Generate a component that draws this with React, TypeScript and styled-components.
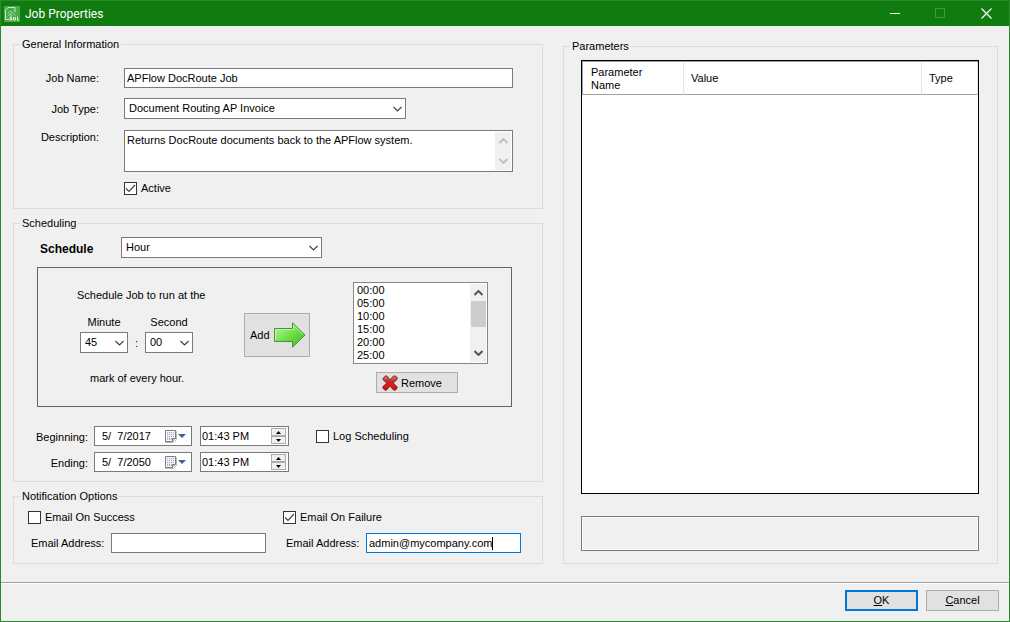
import React, { useId } from 'react';
import styled, { createGlobalStyle, css } from 'styled-components';

const GlobalStyle = createGlobalStyle`
  *, *::before, *::after { box-sizing: border-box; }
  body { margin: 0; background: #f0f0f0; }
  body, button, input, select, textarea {
    font-family: "Liberation Sans", Arial, sans-serif;
    font-size: 11px;
    line-height: 14px;
    color: #000;
  }
  svg { display: block; flex: none; }
`;

const Window = styled.div`
  display: flex;
  flex-direction: column;
  min-height: 100vh;
  background: #f0f0f0;
  border: 1px solid #2a8a2a;
  border-top-width: 0;
`;

const TitleBar = styled.header`
  display: flex;
  align-items: center;
  height: 26px;
  padding-left: 3px;
  background: #107c10;
  border-top: 1px solid #2a8a2a;
  color: #fff;
`;

const Title = styled.h1`
  flex: 1;
  margin: 0;
  padding-left: 5px;
  font-family: Roboto, "Open Sans", sans-serif;
  font-size: 12px;
  font-weight: 400;
  line-height: 16px;
`;

const CaptionButton = styled.button`
  display: grid;
  place-items: center;
  width: 46px;
  height: 24px;
  padding: 0;
  border: 0;
  background: none;
`;

const Content = styled.main`
  flex: 1;
  display: grid;
  grid-template-columns: minmax(0, 530fr) minmax(0, 435fr);
  column-gap: 20px;
  padding: 12px 11px 18px 12px;
`;

const LeftColumn = styled.div`
  display: flex;
  flex-direction: column;
  gap: 8px;
`;

const RightColumn = styled.div`
  display: flex;
  flex-direction: column;
  padding-top: 2px;
`;

const Group = styled.fieldset`
  min-width: 0;
  margin: 0;
  padding: 0;
  border: 1px solid #dcdcdc;
`;

const Legend = styled.legend`
  margin-left: 6px;
  padding: 0 2px;
  line-height: 13px;
`;

const GeneralGrid = styled.div`
  display: grid;
  grid-template-columns: 85px minmax(0, 1fr);
  grid-template-rows: 20px 22px 42px 13px;
  gap: 10px 25px;
  padding: 17px 29px 13px 0;
`;

const FieldLabel = styled.label<{ $top?: boolean }>`
  align-self: ${(p) => (p.$top ? 'start' : 'center')};
  text-align: right;
  white-space: nowrap;
`;

const boxed = css`
  background: #fff;
  border: 1px solid #7a7a7a;
`;

const TextInput = styled.input`
  ${boxed}
  width: 100%;
  height: 20px;
  padding: 0 2px;
  border-radius: 0;
  outline: none;
`;

const SelectBox = styled.div<{ $width: number }>`
  position: relative;
  width: ${(p) => p.$width}px;
  height: 21px;
  svg {
    position: absolute;
    right: 4px;
    top: 8px;
    pointer-events: none;
  }
`;

const NativeSelect = styled.select`
  ${boxed}
  appearance: none;
  display: block;
  width: 100%;
  height: 21px;
  padding: 0 0 1px 4px;
  border-radius: 0;
  outline: none;
`;

const Chevron = ({ up, color = '#444', heavy }: { up?: boolean; color?: string; heavy?: boolean }) => (
  <svg width="9" height="6" viewBox="0 0 9 6" fill="none" stroke={color} strokeWidth={heavy ? 2 : 1.2}>
    <path d={up ? 'M.5 5l4-4 4 4' : 'M.5 1l4 4 4-4'} />
  </svg>
);

type DropDownProps = { id: string; width: number; value: string };
const DropDown = ({ id, width, value }: DropDownProps) => (
  <SelectBox $width={width}>
    <NativeSelect id={id} defaultValue={value}>
      <option>{value}</option>
    </NativeSelect>
    <Chevron />
  </SelectBox>
);

const MemoBox = styled.div`
  ${boxed}
  display: flex;
  height: 42px;
  padding: 1px;
`;

const Memo = styled.textarea`
  flex: 1;
  min-width: 0;
  padding: 1px;
  border: 0;
  background: none;
  resize: none;
  outline: none;
  overflow: hidden;
`;

const ScrollTrack = styled.div`
  display: flex;
  flex-direction: column;
  align-items: center;
  width: 16px;
  padding: 6px 0;
  background: #f0f0f0;
`;

const ScrollThumb = styled.div`
  width: 15px;
  height: 26px;
  margin: 5px 0 auto;
  background: #cdcdcd;
`;

const Spacer = styled.div`
  flex: 1;
`;

const CheckLabel = styled.label`
  display: flex;
  align-items: center;
  gap: 4px;
  height: 13px;
  line-height: 12px;
`;

const CheckText = styled.span`
  align-self: flex-start;
`;

const CheckFrame = styled.span`
  position: relative;
  display: block;
  width: 13px;
  height: 13px;
  svg {
    position: absolute;
    inset: 0;
    pointer-events: none;
    visibility: hidden;
  }
  input:checked + svg { visibility: visible; }
`;

const CheckInput = styled.input`
  appearance: none;
  display: block;
  width: 13px;
  height: 13px;
  margin: 0;
  background: #fff;
  border: 1px solid #333;
`;

const Check = ({ label, checked = false }: { label: string; checked?: boolean }) => (
  <CheckLabel>
    <CheckFrame>
      <CheckInput type="checkbox" defaultChecked={checked} />
      <svg width="13" height="13" viewBox="0 0 13 13" fill="none" stroke="#444" strokeWidth="1.2">
        <path d="M2 6.500l3 3 6-6.500" />
      </svg>
    </CheckFrame>
    <CheckText>{label}</CheckText>
  </CheckLabel>
);

const ScheduleRow = styled.div`
  display: flex;
  align-items: center;
  padding: 7px 0 9px 26px;
`;

const StrongLabel = styled.label`
  width: 81px;
  padding-top: 2px;
  font-size: 12px;
  font-weight: 700;
`;

const Frame = styled.div`
  display: grid;
  grid-template-columns: 167px 109px 135px;
  align-items: start;
  margin: 0 30px 0 23px;
  padding: 14px 0 13px 39px;
  border: 1px solid #646464;
`;

const TimePicker = styled.div`
  display: flex;
  flex-direction: column;
  padding-top: 6px;
`;

const PickerRow = styled.div`
  display: flex;
  align-items: flex-end;
  padding: 13px 0 18px 3px;
`;

const PickerField = styled.div`
  display: flex;
  flex-direction: column;
  gap: 3px;
  text-align: center;
`;

const Colon = styled.span`
  width: 17px;
  padding-bottom: 3px;
  text-align: center;
`;

const Indented = styled.span`
  padding-left: 13px;
`;

const AddCell = styled.div`
  padding-top: 31px;
`;

const PushButton = styled.button<{ $w: number }>`
  display: flex;
  align-items: center;
  justify-content: center;
  width: ${(p) => p.$w}px;
  height: 21px;
  padding: 0;
  background: #e1e1e1;
  border: 1px solid #adadad;
  border-radius: 0;
`;

const AddButton = styled(PushButton)`
  justify-content: flex-start;
  gap: 4px;
  height: 44px;
  padding-left: 5px;
`;

const RemoveButton = styled(PushButton)`
  justify-content: flex-start;
  gap: 3px;
  margin-left: 23px;
  padding-left: 5px;
`;

const DialogButton = styled(PushButton)<{ $primary?: boolean }>`
  padding-bottom: 2px;
  ${(p) => p.$primary && 'border: 2px solid #0078d7;'}
`;

const ListColumn = styled.div`
  display: flex;
  flex-direction: column;
  gap: 8px;
`;

const ListBox = styled.div`
  display: flex;
  height: 82px;
  padding: 1px;
  background: #fff;
  border: 1px solid #828790;
`;

const List = styled.select`
  flex: 1;
  min-width: 0;
  height: 78px;
  padding: 0;
  border: 0;
  border-radius: 0;
  background: none;
  overflow: hidden;
  outline: none;
  option {
    height: 13px;
    min-height: 13px;
    padding: 0 2px;
    line-height: 14px;
  }
`;

const RangeArea = styled.div`
  display: flex;
  align-items: flex-start;
  padding: 19px 0 9px 0;
`;

const RangeGrid = styled.div`
  display: flex;
  flex-direction: column;
  gap: 6px;
  margin-right: 27px;
`;

const RangeRow = styled.div`
  display: grid;
  grid-template-columns: 74px 98px 89px;
  align-items: start;
  label { padding-top: 4px; }
  > :nth-child(2) { margin-left: 6px; margin-right: -6px; }
  > :nth-child(3) { margin-left: 14px; margin-right: -14px; }
`;

const PickerBox = styled.div`
  ${boxed}
  display: flex;
  align-items: center;
  height: 20px;
`;

const PlainInput = styled.input<{ $pad: number }>`
  flex: 1;
  min-width: 0;
  padding: 0 0 0 ${(p) => p.$pad}px;
  border: 0;
  background: none;
  outline: none;
`;

const CalendarButton = styled.button`
  display: flex;
  align-items: center;
  gap: 1px;
  width: 26px;
  padding: 0;
  border: 0;
  background: none;
`;

const Spinner = styled.div`
  display: flex;
  flex-direction: column;
  width: 15px;
  margin-right: 2px;
`;

const SpinButton = styled.button`
  display: grid;
  place-items: center;
  height: 8px;
  padding: 0;
  background: #f0f0f0;
  border: 1px solid #adadad;
  border-radius: 0;
`;

const LogCell = styled.div`
  padding: 4px 0 0 14px;
`;

const NotifyGrid = styled.div`
  display: grid;
  grid-template-columns: 1fr 1fr;
  row-gap: 9px;
  padding: 8px 4px 10px 14px;
`;

const AddressField = styled.div`
  display: flex;
  align-items: center;
  padding-left: 3px;
  label { width: 80px; white-space: nowrap; }
`;

const AddressBox = styled.div<{ $focused?: boolean }>`
  display: flex;
  align-items: center;
  width: 155px;
  height: 20px;
  padding-left: 2px;
  overflow: hidden;
  background: #fff;
  border: 1px solid ${(p) => (p.$focused ? '#0078d7' : '#7a7a7a')};
`;

const AddressInput = styled.input<{ $fit?: boolean }>`
  ${(p) => (p.$fit ? 'field-sizing: content;' : 'width: 100%;')}
  padding: 0;
  border: 0;
  background: none;
  outline: none;
  caret-color: transparent;
`;

const Caret = styled.span`
  width: 1px;
  height: 13px;
  background: #000;
`;

const ParamGroup = styled(Group)`
  flex: 1;
  display: flex;
  flex-direction: column;
  padding: 0;
`;

const ParamBody = styled.div`
  flex: 1;
  display: flex;
  flex-direction: column;
  gap: 22px;
  padding: 7px 18px 12px 17px;
`;

const GridPanel = styled.div`
  flex: 1;
  background: #fff;
  border: 1px solid #000;
`;

const ParamTable = styled.table`
  width: 100%;
  table-layout: fixed;
  border-collapse: separate;
  border-spacing: 0;
  border-top: 1px solid #a0a0a0;
  border-left: 1px solid #a0a0a0;
`;

const HeadCell = styled.th`
  height: 33px;
  padding: 1px 36px 0 8px;
  border-right: 1px solid #e5e5e5;
  border-bottom: 1px solid #a0a0a0;
  font-weight: 400;
  line-height: 13px;
  text-align: left;
  &:not(:first-child) { padding-right: 0; padding-left: 7px; }
`;

const HelpPanel = styled.div`
  height: 35px;
  border: 1px solid #7a7a7a;
  box-shadow: inset 0 0 0 1px #fff;
`;

const Footer = styled.footer`
  display: flex;
  justify-content: flex-end;
  gap: 8px;
  padding: 7px 10px 10px;
  border-top: 1px solid #a0a0a0;
  box-shadow: inset 0 1px 0 #fff;
`;

const AppIcon = () => (
  <svg width="16" height="16" viewBox="0 0 16 16" fill="none">
    <rect width="16" height="16" fill="#4aa94a" />
    <path d="M1.500 13.500V4l2.500-2.500h7V6M1.500 13.500h4" stroke="#c4e6c4" />
    <path d="M4 7.500C5 5 8.500 5 9.500 7.500l2 2M3.500 10.500c1-2 4-2.500 5-.5M6 8h2" stroke="#a8d8a8" />
    <path d="M8 11H6v1.500h2V14H5.500M9.500 11.500h2V14h-2zM13.500 10.500V14H15" stroke="#d8f0d8" />
  </svg>
);

const ArrowIcon = () => (
  <svg width="32" height="26" viewBox="0 0 32 26">
    <defs>
      <linearGradient id="arrow-fill" x1="0" y1="0" x2="1" y2="1">
        <stop offset="0" stopColor="#c4f7b4" />
        <stop offset=".5" stopColor="#6fe048" />
        <stop offset="1" stopColor="#3fb521" />
      </linearGradient>
    </defs>
    <path d="M.5 6.500h18V.8L31 13 18.500 25.200V19.500H.5z" fill="url(#arrow-fill)" stroke="#3f9a2c" />
    <path d="M1.500 18V7.500h18V3.200L29.500 13" fill="none" stroke="#c9f7bb" strokeOpacity=".8" />
  </svg>
);

const CrossIcon = () => (
  <svg width="16" height="16" viewBox="0 0 16 16">
    <defs>
      <linearGradient id="cross-fill" x1="0" y1="0" x2="0" y2="1">
        <stop offset="0" stopColor="#d98080" />
        <stop offset=".4" stopColor="#c42626" />
        <stop offset=".75" stopColor="#e01818" />
        <stop offset="1" stopColor="#a81010" />
      </linearGradient>
    </defs>
    <path
      d="M1 3.500L3.500.8 5 1 8 4.800 11.500 1l2 0L15.300 3 15 4.500 11.200 8l4 4-.2 1.500L13 15.300l-1.500-.3L8 11.200 4.500 15 3 15.300.8 13 1 11.500 4.800 8 1.200 5z"
      fill="url(#cross-fill)"
      stroke="#7a1616"
      strokeWidth=".9"
    />
  </svg>
);

const CalendarIcon = () => (
  <svg width="12" height="13" viewBox="0 0 12 13">
    <path d="M10.500 1.500h1v8l-3 3h-8v-1" fill="none" stroke="#c0b8b8" />
    <path d="M.5.5h10v8l-3 3h-7z" fill="#fafaff" stroke="#857878" />
    <path d="M2 2h7v6L7 10H2z" fill="#a3b1cc" />
    <path d="M2 3.500h7M2 5.500h7M2 7.500h7M3.500 2v8M5.500 2v8M7.500 2v8" stroke="#f4f6fc" strokeWidth=".8" />
    <path d="M7.500 11.500v-3h3" fill="#d8d4dc" stroke="#857878" />
  </svg>
);

const Triangle = ({ up, color = '#000', size = 5 }: { up?: boolean; color?: string; size?: number }) => (
  <svg width={size} height={size === 5 ? 3 : 4} viewBox="0 0 8 4" preserveAspectRatio="none">
    <path d={up ? 'M0 4L4 0l4 4z' : 'M0 0h8L4 4z'} fill={color} />
  </svg>
);

type RangeProps = { label: string; date: string; time: string };
const RangeFields = ({ label, date, time }: RangeProps) => {
  const id = useId();
  return (
    <RangeRow>
      <FieldLabel htmlFor={id} $top>{label}</FieldLabel>
      <PickerBox>
        <PlainInput id={id} $pad={7} defaultValue={date} />
        <CalendarButton type="button" aria-label={`${label} calendar`}>
          <CalendarIcon />
          <Triangle color="#3f5f94" size={8} />
        </CalendarButton>
      </PickerBox>
      <PickerBox>
        <PlainInput $pad={1} aria-label={`${label} time`} defaultValue={time} />
        <Spinner>
          <SpinButton type="button" aria-label="Later"><Triangle up /></SpinButton>
          <SpinButton type="button" aria-label="Earlier"><Triangle /></SpinButton>
        </Spinner>
      </PickerBox>
    </RangeRow>
  );
};

const marks = ['00:00', '05:00', '10:00', '15:00', '20:00', '25:00'];

export default function App() {
  return (
    <>
      <GlobalStyle />
      <Window>
        <TitleBar>
          <AppIcon />
          <Title>Job Properties</Title>
          <CaptionButton aria-label="Minimize">
            <svg width="11" height="11" viewBox="0 0 11 11"><path d="M1 5.500h10" stroke="#fff" /></svg>
          </CaptionButton>
          <CaptionButton aria-label="Maximize" disabled>
            <svg width="11" height="11" viewBox="0 0 11 11"><path d="M.5.5h9v9h-9z" fill="none" stroke="#419a41" /></svg>
          </CaptionButton>
          <CaptionButton aria-label="Close">
            <svg width="11" height="11" viewBox="0 0 11 11"><path d="M.5.5l10 10M10.500.5l-10 10" stroke="#fff" strokeWidth="1.200" /></svg>
          </CaptionButton>
        </TitleBar>

        <Content>
          <LeftColumn>
            <Group>
              <Legend>General Information</Legend>
              <GeneralGrid>
                <FieldLabel htmlFor="job-name">Job Name:</FieldLabel>
                <TextInput id="job-name" defaultValue="APFlow DocRoute Job" />
                <FieldLabel htmlFor="job-type">Job Type:</FieldLabel>
                <DropDown id="job-type" width={282} value="Document Routing AP Invoice" />
                <FieldLabel htmlFor="description" $top>Description:</FieldLabel>
                <MemoBox>
                  <Memo id="description" defaultValue="Returns DocRoute documents back to the APFlow system." />
                  <ScrollTrack>
                    <Chevron up heavy color="#bfbfbf" />
                    <Spacer />
                    <Chevron heavy color="#bfbfbf" />
                  </ScrollTrack>
                </MemoBox>
                <span />
                <Check label="Active" checked />
              </GeneralGrid>
            </Group>

            <Group>
              <Legend>Scheduling</Legend>
              <ScheduleRow>
                <StrongLabel htmlFor="schedule">Schedule</StrongLabel>
                <DropDown id="schedule" width={201} value="Hour" />
              </ScheduleRow>
              <Frame>
                <TimePicker>
                  <span>Schedule Job to run at the</span>
                  <PickerRow>
                    <PickerField>
                      <label htmlFor="minute">Minute</label>
                      <DropDown id="minute" width={48} value="45" />
                    </PickerField>
                    <Colon>:</Colon>
                    <PickerField>
                      <label htmlFor="second">Second</label>
                      <DropDown id="second" width={48} value="00" />
                    </PickerField>
                  </PickerRow>
                  <Indented>mark of every hour.</Indented>
                </TimePicker>
                <AddCell>
                  <AddButton type="button" $w={66}>Add <ArrowIcon /></AddButton>
                </AddCell>
                <ListColumn>
                  <ListBox>
                    <List size={6} aria-label="Scheduled times">
                      {marks.map((m) => <option key={m}>{m}</option>)}
                    </List>
                    <ScrollTrack>
                      <Chevron up heavy color="#555" />
                      <ScrollThumb />
                      <Chevron heavy color="#555" />
                    </ScrollTrack>
                  </ListBox>
                  <RemoveButton type="button" $w={82}><CrossIcon />Remove</RemoveButton>
                </ListColumn>
              </Frame>
              <RangeArea>
                <RangeGrid>
                  <RangeFields label="Beginning:" date="5/  7/2017" time="01:43 PM" />
                  <RangeFields label="Ending:" date="5/  7/2050" time="01:43 PM" />
                </RangeGrid>
                <LogCell><Check label="Log Scheduling" /></LogCell>
              </RangeArea>
            </Group>

            <Group>
              <Legend>Notification Options</Legend>
              <NotifyGrid>
                <Check label="Email On Success" />
                <Check label="Email On Failure" checked />
                <AddressField>
                  <label htmlFor="success-mail">Email Address:</label>
                  <AddressBox><AddressInput id="success-mail" /></AddressBox>
                </AddressField>
                <AddressField>
                  <label htmlFor="failure-mail">Email Address:</label>
                  <AddressBox $focused>
                    <AddressInput id="failure-mail" $fit defaultValue="admin@mycompany.com" />
                    <Caret />
                  </AddressBox>
                </AddressField>
              </NotifyGrid>
            </Group>
          </LeftColumn>

          <RightColumn>
            <ParamGroup>
              <Legend>Parameters</Legend>
              <ParamBody>
                <GridPanel>
                  <ParamTable>
                    <colgroup>
                      <col style={{ width: 101 }} />
                      <col />
                      <col style={{ width: 56 }} />
                    </colgroup>
                    <thead>
                      <tr>
                        <HeadCell>Parameter Name</HeadCell>
                        <HeadCell>Value</HeadCell>
                        <HeadCell>Type</HeadCell>
                      </tr>
                    </thead>
                  </ParamTable>
                </GridPanel>
                <HelpPanel />
              </ParamBody>
            </ParamGroup>
          </RightColumn>
        </Content>

        <Footer>
          <DialogButton type="button" $w={73} $primary><span><u>O</u>K</span></DialogButton>
          <DialogButton type="button" $w={73}><span><u>C</u>ancel</span></DialogButton>
        </Footer>
      </Window>
    </>
  );
}
